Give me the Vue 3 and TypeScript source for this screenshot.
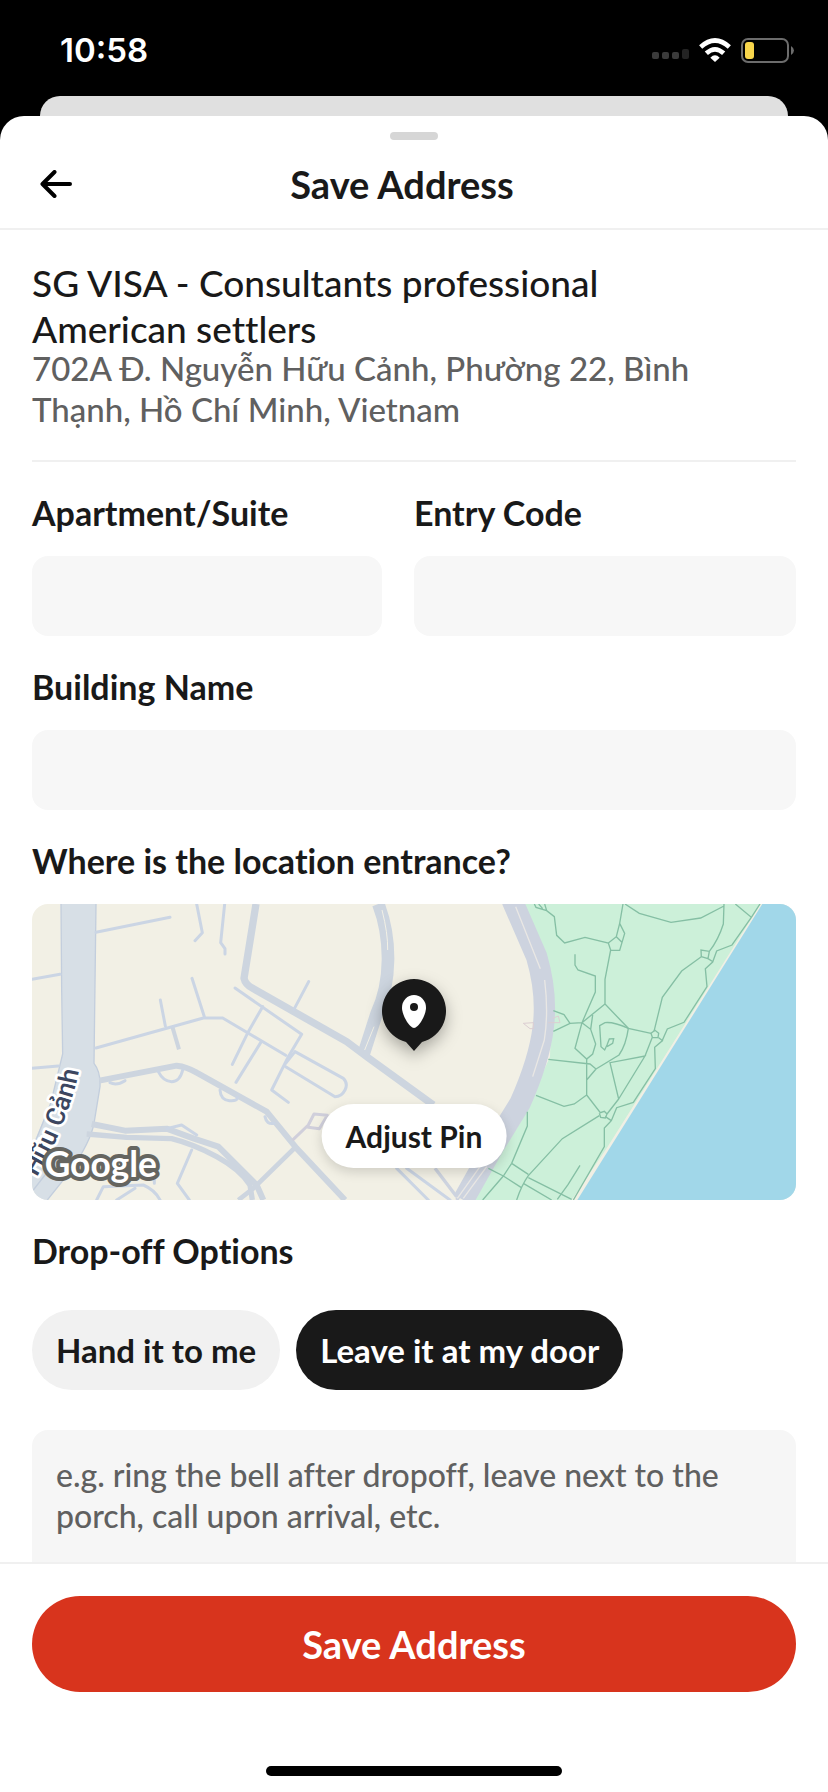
<script setup lang="ts">
import { ref } from 'vue'

type DropOff = 'hand' | 'door'

const apartment = ref('')
const entryCode = ref('')
const building = ref('')
const instructions = ref('')
const dropOff = ref<DropOff>('door')

const options: { id: DropOff; label: string }[] = [
  { id: 'hand', label: 'Hand it to me' },
  { id: 'door', label: 'Leave it at my door' },
]
</script>

<template>
  <div class="screen">
    <div class="status">
      <span class="time">10:58</span>
      <div class="indicators">
        <svg class="signal" viewBox="0 0 37 24" aria-hidden="true">
          <rect x="0" y="14" width="7" height="7" rx="2" fill="#3b3b3b" />
          <rect x="10" y="14" width="7" height="7" rx="2" fill="#3b3b3b" />
          <rect x="20" y="14" width="7" height="7" rx="2" fill="#3b3b3b" />
          <rect x="30" y="11" width="7" height="10" rx="2" fill="#232323" />
        </svg>
        <svg class="wifi" viewBox="0 0 96 72" aria-hidden="true">
          <g fill="none" stroke="#fff" stroke-width="14">
            <path d="M5 27Q48-12 91 27" />
            <path d="M22 46Q48 22 74 46" />
          </g>
          <path d="M48 72 34 59q14-14 28 0z" fill="#fff" />
        </svg>
        <svg class="battery" viewBox="0 0 53 25" aria-hidden="true">
          <rect x="1" y="1" width="46" height="23" rx="6" fill="none" stroke="#6c6c6c" stroke-width="2" />
          <rect x="4" y="4" width="9" height="17" rx="3" fill="#f7d54b" />
          <path d="M50 8q3 2 3 4.500t-3 4.500z" fill="#6c6c6c" />
        </svg>
      </div>
    </div>
    <div class="behind"></div>

    <main class="sheet">
      <div class="grabber"></div>
      <header class="header">
        <button class="back" type="button" aria-label="Back">
          <svg viewBox="0 0 32 28" aria-hidden="true">
            <path d="M14.500 2 2.500 14l12 12M3 14h27" fill="none" stroke="#000" stroke-width="4" stroke-linecap="round" stroke-linejoin="round" />
          </svg>
        </button>
        <h1 class="title">Save Address</h1>
      </header>

      <form id="address-form" class="form" @submit.prevent>
        <section class="address">
          <h2 class="place">SG VISA - Consultants professional American settlers</h2>
          <p class="street">702A Đ. Nguyễn Hữu Cảnh, Phường 22, Bình Thạnh, Hồ Chí Minh, Vietnam</p>
        </section>

        <div class="pair">
          <div class="field">
            <label class="label" for="apartment">Apartment/Suite</label>
            <input id="apartment" v-model="apartment" class="input" type="text" />
          </div>
          <div class="field">
            <label class="label" for="entry">Entry Code</label>
            <input id="entry" v-model="entryCode" class="input" type="text" />
          </div>
        </div>

        <div class="field">
          <label class="label" for="building">Building Name</label>
          <input id="building" v-model="building" class="input" type="text" />
        </div>

        <section class="field">
          <h3 class="label">Where is the location entrance?</h3>
          <div class="map">
            <svg class="tiles" viewBox="36 42 2292 888" preserveAspectRatio="xMidYMid slice" aria-hidden="true">
              <rect x="36" y="42" width="2292" height="888" fill="#f2f0e5" />

              <!-- park, shoreline and river -->
              <path d="M1515 42H2226L1672 930H1345L1500 700 1590 500 1595 340z" fill="#ccf0d9" />
              <path d="M2222 42H2228L1676 930H1655L1760 775z" fill="#f0efe4" />
              <path d="M2227 42H2328V930H1672z" fill="#a1d7e9" />

              <!-- main avenue -->
              <path d="M123 42H228L222 520Q242 545 240 590L222 700Q212 755 150 845L82 930H36V770L92 640 128 492z" fill="#d7dfe6" />
              <path d="M123 42 125 300 128 492 92 640 36 780M228 42 222 520Q242 545 240 590L222 700Q212 755 150 845L82 930M40 900 110 810" fill="none" stroke="#c3cedd" stroke-width="4" />

              <!-- wide roads -->
              <g fill="none" stroke="#cdd5df" stroke-linejoin="round">
                <path d="M1075 42Q1105 120 1104 210T1070 370L1030 495" stroke-width="38" />
                <path d="M708 42 672 265Q676 285 700 296L980 455 1040 500 1240 645" stroke-width="22" />
                <path d="M238 572 470 527Q500 530 530 548L740 665 830 775 975 930" stroke-width="18" />
                <path d="M215 702 315 722 440 716 520 745 595 770 710 885 730 930" stroke-width="18" />
                <path d="M200 732 320 742 455 746Q520 762 590 800T690 885L697 930" stroke-width="16" />
                <path d="M830 768 700 895 655 930" stroke-width="14" />
                <path d="M457 410 477 478" stroke-width="12" />
              </g>
              <g fill="none" stroke="#cdd3df">
                <path d="M1476 30 1550 200Q1582 310 1570 410T1500 640L1420 770 1330 930" stroke-width="64" />
                <path d="M1245 835 1310 920M1310 930 1370 840" stroke-width="10" />
              </g>
              <path d="M1086 60Q1104 130 1103 180M1062 410 1034 480" fill="none" stroke="#f2f0e5" stroke-width="3" />
              <path d="M1487 50 1561 236M1574 270Q1586 370 1573 450L1538 560M1312 925 1380 830M1330 925 1400 830" fill="none" stroke="#e9e7e4" stroke-width="4" />

              <!-- side streets -->
              <g fill="none" stroke="#cbd5e4" stroke-width="9" stroke-linejoin="round" stroke-linecap="round">
                <path d="M228 127 450 82M530 42 547 128 525 152M614 42 602 158 615 176V192M36 268 120 253M36 535 115 528" />
                <path d="M228 474 550 384H608L797 496M516 265 553 380M421 330 436 408M866 275 822 358M645 294 845 433 805 500 755 600 805 637" />
                <path d="M728 350 685 425 637 523M722 458 648 577M797 520 825 485 970 565Q985 580 975 600T945 620L797 530" />
                <path d="M415 545Q430 575 455 575T488 540M270 578Q290 588 315 572M600 600Q602 630 628 632T652 622M735 680Q740 705 762 700M515 780 472 880 508 930M230 930 250 890 370 885Q405 900 420 930M290 930 345 895M403 880V850M440 716 485 705 530 735M1130 835 1225 930M1160 835 1290 930" />
                <path d="M820 748 865 705 882 672 922 676 898 716 865 712" stroke="#d0cfdb" />
              </g>
              <path d="M1510 400 1530 416H1540V398zM1598 385 1615 378 1620 398H1585" fill="none" stroke="#dcced2" stroke-width="3" />

              <!-- park paths -->
              <g transform="translate(1140 0)" fill="none" stroke="#85bfa4" stroke-width="4">
                <path d="M403 42 408 52 440 62 463 80 470 136 494 159 555 142 625 159 632 180 615 268V342L685 415 753 430M416 42 428 56M434 42 440 62" />
                <path d="M669 42 659 100 649 140 625 159M659 100 674 130 659 181H632M649 140 665 156" />
                <path d="M675 42 718 70 813 97 902 84 972 48M972 42 970 102Q955 150 928 184L903 180 904 200 845 243 787 322 762 424M928 184 924 206 904 200M924 206 940 216M1006 42 1054 82 996 165 950 183 938 216 916 236 921 290 852 397 802 417 786 453 764 472 766 536 700 637 650 653 634 692 613 714V770L520 930M1080 42 1054 82" />
                <path d="M525 193V225L534 240 586 258V306L546 398 510 400 460 424M460 362 492 374 510 400M546 398 615 342M546 398 525 475 560 507 578 492 587 462 572 418 546 398M572 418 578 375" />
                <path d="M685 415Q640 395 615 398L599 407 603 470 614 480 621 465 628 447 641 446 638 460 621 470M685 415Q678 465 657 495L588 537 570 522 445 508M588 537 560 570M560 507V615L523 642 492 649 408 616M560 615 601 668 613 664 621 672 616 684 602 682 598 670M621 672 656 627 630 518 735 498 656 627M735 498 757 442 753 430 765 421 776 430 774 443 757 442M776 443 789 453" />
                <path d="M598 677 487 746 385 857Q365 885 350 930M382 665V708L335 820 310 858 248 930M265 835 310 858 363 892M335 820 385 853M385 863 515 928M370 880 455 930M540 826 504 884 472 928M616 680 634 692" />
              </g>

              <path id="avenue-line" d="M18 910Q88 810 129 700T176 542" fill="none" />
              <text class="road-name">
                <textPath href="#avenue-line" startOffset="100%" text-anchor="end">Hữu Cảnh</textPath>
              </text>
              <text class="brand" x="74" y="860">Google</text>
            </svg>
            <svg class="pin" viewBox="0 0 66 74" aria-hidden="true">
              <path d="M33 73 25 64A32 32 0 1 1 41 64z" fill="#191919" />
              <path d="M33 50C29 50 21 38 21 29.500a12 12.500 0 0 1 24 0C45 38 37 50 33 50z" fill="#fff" />
              <circle cx="33" cy="29" r="4" fill="#191919" />
            </svg>
            <button class="adjust" type="button">Adjust Pin</button>
          </div>
        </section>

        <section class="dropoff">
          <h3 class="label">Drop-off Options</h3>
          <div class="chips">
            <button
              v-for="option in options"
              :key="option.id"
              class="chip"
              :class="{ active: dropOff === option.id }"
              type="button"
              :aria-pressed="dropOff === option.id"
              @click="dropOff = option.id"
            >
              {{ option.label }}
            </button>
          </div>
          <textarea
            v-model="instructions"
            class="notes"
            rows="4"
            aria-label="Drop-off instructions"
            placeholder="e.g. ring the bell after dropoff, leave next to the porch, call upon arrival, etc."
          ></textarea>
        </section>
      </form>

      <footer class="footer">
        <button class="save" type="submit" form="address-form">Save Address</button>
        <div class="home"></div>
      </footer>
    </main>
  </div>
</template>

<style>
body {
  margin: 0;
  background: #000;
}
</style>

<style scoped>
.screen {
  box-sizing: border-box;
  display: flex;
  flex-direction: column;
  height: 100vh;
  background: #000;
  color: #191919;
  font-family: Lato, "Noto Sans", sans-serif;
  font-variant-ligatures: none;
}
.screen * {
  box-sizing: border-box;
}
h1, h2, h3, p {
  margin: 0;
}
button, input, textarea {
  border: 0;
  font-family: inherit;
  font-variant-ligatures: inherit;
  color: inherit;
}
button {
  padding: 0;
  cursor: pointer;
}
svg {
  display: block;
}

.status {
  flex: none;
  display: flex;
  align-items: center;
  justify-content: space-between;
  height: 96px;
  padding: 4px 34px 0 60px;
  color: #fff;
}
.time {
  font: 600 33px/40px Inter, sans-serif;
}
.indicators {
  display: flex;
  align-items: center;
  gap: 10px;
}
.signal {
  width: 37px;
  height: 24px;
}
.wifi {
  width: 32px;
  height: 24px;
}
.battery {
  width: 53px;
  height: 25px;
}

.behind {
  flex: none;
  height: 20px;
  margin: 0 40px;
  border-radius: 20px 20px 0 0;
  background: #e0e0e0;
}
.sheet {
  flex: 1;
  min-height: 0;
  display: flex;
  flex-direction: column;
  padding-top: 16px;
  border-radius: 24px 24px 0 0;
  background: #fff;
}
.grabber {
  flex: none;
  align-self: center;
  width: 48px;
  height: 8px;
  border-radius: 4px;
  background: #d6d6d6;
}
.header {
  flex: none;
  display: grid;
  grid-template-columns: 48px 1fr 72px;
  align-items: center;
  height: 90px;
  padding: 0 32px;
  border-bottom: 2px solid #f0f0f0;
}
.back {
  padding: 8px;
  background: none;
}
.back svg {
  width: 32px;
  height: 28px;
}
.title {
  text-align: center;
  font-size: 38px;
  line-height: 44px;
  font-weight: 700;
}

.form {
  flex: 1;
  min-height: 0;
  overflow-y: auto;
  scrollbar-width: none;
  padding: 30px 32px 0;
}
.address {
  padding-bottom: 30px;
  border-bottom: 2px solid #f0f0f0;
}
.place {
  max-width: 660px;
  font-size: 37px;
  line-height: 46px;
  font-weight: 500;
}
.street {
  max-width: 700px;
  margin-top: -4px;
  font-size: 33px;
  line-height: 41px;
  font-weight: 500;
  color: #606060;
}
.pair {
  display: grid;
  grid-template-columns: 350fr 382fr;
  gap: 32px;
}
.field {
  padding-top: 30px;
}
.label {
  display: block;
  margin-bottom: 22px;
  font-size: 34px;
  line-height: 42px;
  font-weight: 700;
}
.input {
  display: block;
  width: 100%;
  height: 80px;
  padding: 0 24px;
  border-radius: 16px;
  background: #f7f7f7;
  font-size: 33px;
}

.map {
  position: relative;
  overflow: hidden;
  height: 296px;
  border-radius: 16px;
}
.tiles {
  width: 100%;
  height: 100%;
}
.road-name {
  font: 500 78px Roboto, sans-serif;
  fill: #3c4660;
  stroke: #fff;
  stroke-width: 16px;
  stroke-linejoin: round;
  paint-order: stroke;
}
.brand {
  font: 700 106px Lato, sans-serif;
  fill: #fff;
  stroke: #656560;
  stroke-width: 24px;
  stroke-linejoin: round;
  paint-order: stroke;
}
.pin {
  position: absolute;
  top: 74px;
  left: 50%;
  width: 66px;
  height: 74px;
  margin-left: -33px;
  filter: drop-shadow(0 6px 8px rgba(0, 0, 0, 0.3));
}
.adjust {
  position: absolute;
  bottom: 32px;
  left: 50%;
  height: 64px;
  padding: 0 24px;
  border-radius: 32px;
  transform: translateX(-50%);
  background: #fff;
  box-shadow: 0 4px 12px rgba(0, 0, 0, 0.15);
  font-size: 30px;
  font-weight: 700;
}

.dropoff {
  padding-top: 30px;
}
.chips {
  display: flex;
  gap: 16px;
  margin: 38px 0 40px;
}
.chip {
  height: 80px;
  padding: 0 24px;
  border-radius: 40px;
  background: #f1f1f1;
  font-size: 33px;
  font-weight: 700;
}
.chip.active {
  background: #191919;
  color: #fff;
}
.notes {
  display: block;
  width: 100%;
  padding: 24px;
  border-radius: 16px;
  background: #f6f6f6;
  font-size: 32px;
  line-height: 41px;
  font-weight: 500;
  resize: none;
}
.notes::placeholder {
  color: #606060;
  opacity: 1;
}

.footer {
  flex: none;
  display: flex;
  flex-direction: column;
  padding: 32px 32px 16px;
  border-top: 2px solid #f0f0f0;
  background: #fff;
}
.save {
  height: 96px;
  border-radius: 48px;
  background: #d8341d;
  color: #fff;
  font-size: 38px;
  font-weight: 700;
}
.home {
  align-self: center;
  width: 296px;
  height: 10px;
  margin-top: 74px;
  border-radius: 5px;
  background: #000;
}
</style>
